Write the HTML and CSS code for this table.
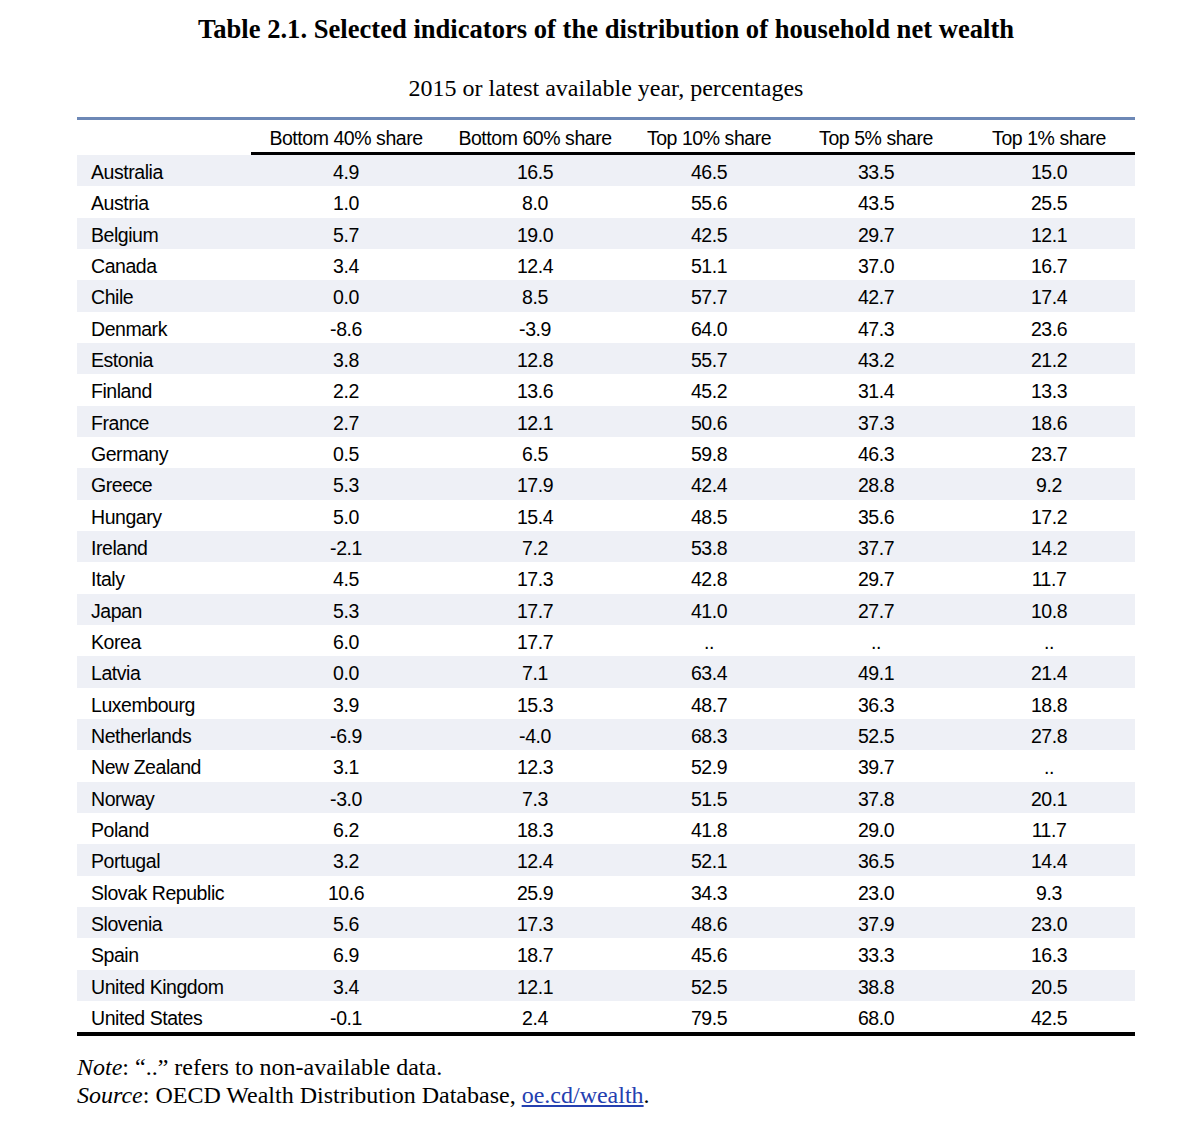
FILE: index.html
```html
<!DOCTYPE html>
<html lang="en">
<head>
<meta charset="utf-8">
<title>Table 2.1</title>
<link rel="stylesheet" href="styles.css">
</head>
<body>
<div class="page">
  <h1 class="title">Table 2.1. Selected indicators of the distribution of household net wealth</h1>
  <p class="subtitle">2015 or latest available year, percentages</p>
  <table class="data">
    <colgroup>
      <col class="c-country">
      <col class="c-b40">
      <col class="c-b60">
      <col class="c-t10">
      <col class="c-t5">
      <col class="c-t1">
    </colgroup>
    <thead>
      <tr>
        <th class="blank"></th>
        <th>Bottom 40% share</th>
        <th>Bottom 60% share</th>
        <th>Top 10% share</th>
        <th>Top 5% share</th>
        <th>Top 1% share</th>
      </tr>
    </thead>
    <tbody>
      <tr><td>Australia</td><td>4.9</td><td>16.5</td><td>46.5</td><td>33.5</td><td>15.0</td></tr>
      <tr><td>Austria</td><td>1.0</td><td>8.0</td><td>55.6</td><td>43.5</td><td>25.5</td></tr>
      <tr><td>Belgium</td><td>5.7</td><td>19.0</td><td>42.5</td><td>29.7</td><td>12.1</td></tr>
      <tr><td>Canada</td><td>3.4</td><td>12.4</td><td>51.1</td><td>37.0</td><td>16.7</td></tr>
      <tr><td>Chile</td><td>0.0</td><td>8.5</td><td>57.7</td><td>42.7</td><td>17.4</td></tr>
      <tr><td>Denmark</td><td>-8.6</td><td>-3.9</td><td>64.0</td><td>47.3</td><td>23.6</td></tr>
      <tr><td>Estonia</td><td>3.8</td><td>12.8</td><td>55.7</td><td>43.2</td><td>21.2</td></tr>
      <tr><td>Finland</td><td>2.2</td><td>13.6</td><td>45.2</td><td>31.4</td><td>13.3</td></tr>
      <tr><td>France</td><td>2.7</td><td>12.1</td><td>50.6</td><td>37.3</td><td>18.6</td></tr>
      <tr><td>Germany</td><td>0.5</td><td>6.5</td><td>59.8</td><td>46.3</td><td>23.7</td></tr>
      <tr><td>Greece</td><td>5.3</td><td>17.9</td><td>42.4</td><td>28.8</td><td>9.2</td></tr>
      <tr><td>Hungary</td><td>5.0</td><td>15.4</td><td>48.5</td><td>35.6</td><td>17.2</td></tr>
      <tr><td>Ireland</td><td>-2.1</td><td>7.2</td><td>53.8</td><td>37.7</td><td>14.2</td></tr>
      <tr><td>Italy</td><td>4.5</td><td>17.3</td><td>42.8</td><td>29.7</td><td>11.7</td></tr>
      <tr><td>Japan</td><td>5.3</td><td>17.7</td><td>41.0</td><td>27.7</td><td>10.8</td></tr>
      <tr><td>Korea</td><td>6.0</td><td>17.7</td><td>..</td><td>..</td><td>..</td></tr>
      <tr><td>Latvia</td><td>0.0</td><td>7.1</td><td>63.4</td><td>49.1</td><td>21.4</td></tr>
      <tr><td>Luxembourg</td><td>3.9</td><td>15.3</td><td>48.7</td><td>36.3</td><td>18.8</td></tr>
      <tr><td>Netherlands</td><td>-6.9</td><td>-4.0</td><td>68.3</td><td>52.5</td><td>27.8</td></tr>
      <tr><td>New Zealand</td><td>3.1</td><td>12.3</td><td>52.9</td><td>39.7</td><td>..</td></tr>
      <tr><td>Norway</td><td>-3.0</td><td>7.3</td><td>51.5</td><td>37.8</td><td>20.1</td></tr>
      <tr><td>Poland</td><td>6.2</td><td>18.3</td><td>41.8</td><td>29.0</td><td>11.7</td></tr>
      <tr><td>Portugal</td><td>3.2</td><td>12.4</td><td>52.1</td><td>36.5</td><td>14.4</td></tr>
      <tr><td>Slovak Republic</td><td>10.6</td><td>25.9</td><td>34.3</td><td>23.0</td><td>9.3</td></tr>
      <tr><td>Slovenia</td><td>5.6</td><td>17.3</td><td>48.6</td><td>37.9</td><td>23.0</td></tr>
      <tr><td>Spain</td><td>6.9</td><td>18.7</td><td>45.6</td><td>33.3</td><td>16.3</td></tr>
      <tr><td>United Kingdom</td><td>3.4</td><td>12.1</td><td>52.5</td><td>38.8</td><td>20.5</td></tr>
      <tr><td>United States</td><td>-0.1</td><td>2.4</td><td>79.5</td><td>68.0</td><td>42.5</td></tr>
    </tbody>
  </table>
  <div class="notes">
    <p><em>Note</em>: “..” refers to non-available data.</p>
    <p><em>Source</em>: OECD Wealth Distribution Database, <a href="#" class="link">oe.cd/wealth</a>.</p>
  </div>
</div>
</body>
</html>
```
FILE: styles.css
```css
html, body {
  margin: 0;
  padding: 0;
  background: #ffffff;
}

body {
  font-family: "Liberation Serif", "Times New Roman", serif;
  color: #000;
}

.page {
  width: 1058px;
  padding: 14px 0 0 77px;
}

.title {
  margin: 0;
  font-size: 26.6px;
  line-height: 30px;
  font-weight: bold;
  text-align: center;
}

.subtitle {
  margin: 30px 0 0;
  font-size: 24px;
  line-height: 28px;
  text-align: center;
}

.data {
  margin-top: 15px;
  width: 1058px;
  table-layout: fixed;
  border-collapse: separate;
  border-spacing: 0;
  border-top: 3px solid #6d88b6;
  border-bottom: 4px solid #000;
  font-family: "Liberation Sans", Arial, sans-serif;
  font-size: 19.5px;
  letter-spacing: -0.45px;
}

.c-country { width: 174px; }
.c-b40 { width: 190px; }
.c-b60 { width: 188px; }
.c-t10 { width: 160px; }
.c-t5 { width: 174px; }
.c-t1 { width: 172px; }

.data th {
  height: 27px;
  padding: 5px 0 0;
  font-weight: normal;
  text-align: center;
  vertical-align: middle;
  border-bottom: 3px solid #000;
}

.data th.blank {
  border-bottom-color: transparent;
}

.data tbody tr {
  height: 31.33px;
}

.data tbody tr:nth-child(odd) {
  background: #eef0f6;
}

.data td {
  padding: 4px 0 0;
  text-align: center;
  vertical-align: middle;
}

.data td:first-child {
  text-align: left;
  padding-left: 14px;
}

.notes {
  margin-top: 17px;
  font-size: 24px;
  line-height: 28px;
}

.notes p {
  margin: 0;
}

.link {
  color: #2440b0;
  text-decoration: underline;
}
```
